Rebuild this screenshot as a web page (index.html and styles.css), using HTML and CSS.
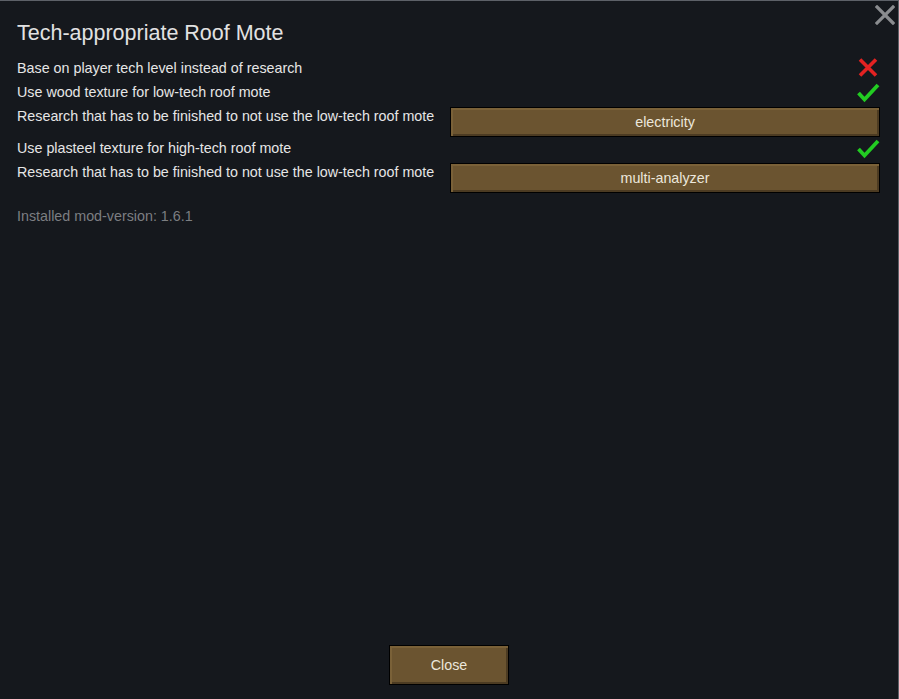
FILE: index.html
```html
<!DOCTYPE html>
<html>
<head>
<meta charset="utf-8">
<link rel="stylesheet" href="styles.css">
</head>
<body>
<div class="window">
  <button class="close-x" aria-label="Close">
    <svg width="20" height="20" viewBox="0 0 20 20"><path d="M2 2 L18 18 M18 2 L2 18" stroke="#8a8c8f" stroke-width="3.2" stroke-linecap="square"/></svg>
  </button>
  <h1 class="title">Tech-appropriate Roof Mote</h1>
  <div class="settings">
    <div class="row">
      <span class="label">Base on player tech level instead of research</span>
      <svg class="icon" width="24" height="24" viewBox="0 0 24 24"><path d="M4 3.5 L20 19.5 M20 3.5 L4 19.5" stroke="#e32222" stroke-width="3.6"/></svg>
    </div>
    <div class="row">
      <span class="label">Use wood texture for low-tech roof mote</span>
      <svg class="icon" width="24" height="24" viewBox="0 0 24 24"><path d="M2.5 13 L8.5 19.5 L22 5" fill="none" stroke="#22cc22" stroke-width="3.8"/></svg>
    </div>
    <div class="row tall">
      <span class="label">Research that has to be finished to not use the low-tech roof mote</span>
      <button class="btn wide">electricity</button>
    </div>
    <div class="row">
      <span class="label">Use plasteel texture for high-tech roof mote</span>
      <svg class="icon" width="24" height="24" viewBox="0 0 24 24"><path d="M2.5 13 L8.5 19.5 L22 5" fill="none" stroke="#22cc22" stroke-width="3.8"/></svg>
    </div>
    <div class="row tall">
      <span class="label">Research that has to be finished to not use the low-tech roof mote</span>
      <button class="btn wide">multi-analyzer</button>
    </div>
    <div class="row version">
      <span class="label muted">Installed mod-version: 1.6.1</span>
    </div>
  </div>
  <div class="footer">
    <button class="btn close">Close</button>
  </div>
</div>
</body>
</html>
```
FILE: styles.css
```css
html, body {
  margin: 0;
  padding: 0;
  background: #15181d;
}
body {
  width: 899px;
  height: 699px;
  overflow: hidden;
  font-family: "Liberation Sans", Arial, sans-serif;
  color: #e4e4e4;
}
.window {
  position: relative;
  box-sizing: border-box;
  width: 899px;
  height: 699px;
  background: #15181d;
  border-top: 1px solid #5d6168;
  border-right: 1px solid #5d6168;
  display: flex;
  flex-direction: column;
  padding: 0 18px 0 17px;
}
.close-x {
  position: absolute;
  top: 3px;
  right: 2px;
  width: 22px;
  height: 22px;
  padding: 1px;
  border: 0;
  background: transparent;
}
.title {
  margin: 19px 0 0 0;
  font-size: 21.5px;
  font-weight: normal;
  line-height: 26px;
  color: #e2e2e2;
}
.settings {
  margin-top: 10px;
  display: flex;
  flex-direction: column;
}
.row {
  display: flex;
  justify-content: space-between;
  align-items: flex-start;
  height: 24px;
}
.row.tall {
  height: 32px;
}
.row.version {
  margin-top: 12px;
}
.label {
  font-size: 14.3px;
  line-height: 25px;
  color: #e6e6e6;
}
.label.muted {
  color: #7c7e82;
}
.icon {
  margin-right: 0;
  display: block;
}
.btn {
  box-sizing: border-box;
  font-family: "Liberation Sans", Arial, sans-serif;
  font-size: 14.3px;
  color: #ece7dc;
  background: #6b5430;
  border: 1px solid #000;
  box-shadow:
    inset 2px 2px 0 #7a6138,
    inset -2px -2px 0 #4c3b22;
  padding: 0;
  cursor: pointer;
}
.btn.wide {
  flex: none;
  width: 430px;
  height: 30px;
  margin-top: 3px;
  margin-right: 0;
}
.footer {
  margin-top: auto;
  margin-bottom: 14px;
  display: flex;
  justify-content: center;
}
.btn.close {
  width: 120px;
  height: 40px;
  margin-left: 1px;
}
```
